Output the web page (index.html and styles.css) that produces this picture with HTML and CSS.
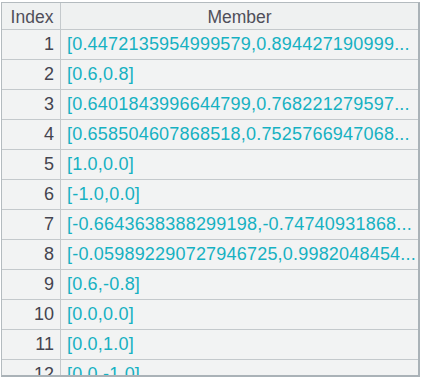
FILE: index.html
```html
<!DOCTYPE html>
<html lang="en">
<head>
    <meta charset="UTF-8">
    <title>Member</title>
    <link rel="stylesheet" href="styles.css">
</head>
<body>
    <div class="grid">
        <div class="row head">
            <div class="idx">Index</div>
            <div class="val">Member</div>
        </div>
        <div class="row"><div class="idx">1</div><div class="val">[0.4472135954999579,0.894427190999...</div></div>
        <div class="row"><div class="idx">2</div><div class="val">[0.6,0.8]</div></div>
        <div class="row"><div class="idx">3</div><div class="val">[0.6401843996644799,0.768221279597...</div></div>
        <div class="row"><div class="idx">4</div><div class="val">[0.658504607868518,0.7525766947068...</div></div>
        <div class="row"><div class="idx">5</div><div class="val">[1.0,0.0]</div></div>
        <div class="row"><div class="idx">6</div><div class="val">[-1.0,0.0]</div></div>
        <div class="row"><div class="idx">7</div><div class="val">[-0.6643638388299198,-0.74740931868...</div></div>
        <div class="row"><div class="idx">8</div><div class="val">[-0.059892290727946725,0.9982048454...</div></div>
        <div class="row"><div class="idx">9</div><div class="val">[0.6,-0.8]</div></div>
        <div class="row"><div class="idx">10</div><div class="val">[0.0,0.0]</div></div>
        <div class="row"><div class="idx">11</div><div class="val">[0.0,1.0]</div></div>
        <div class="row"><div class="idx">12</div><div class="val">[0.0,-1.0]</div></div>
    </div>
</body>
</html>
```

FILE: styles.css
```css
body {
    margin: 0;
    background: #ffffff;
    font-family: "Liberation Sans", Arial, sans-serif;
}
.grid {
    margin: 2px 1px 0 1px;
    height: 375px;
    box-sizing: border-box;
    border-top: 1px solid #b4bbbf;
    border-left: 1px solid #b4bbbf;
    border-right: 2px solid #aab2b7;
    border-bottom: 2px solid #aab2b7;
    background: #f2f3f3;
    overflow: hidden;
}
.row {
    display: flex;
    height: 30px;
    box-sizing: border-box;
    border-bottom: 1px solid #c4c9cc;
    font-size: 18px;
    line-height: 29px;
    white-space: nowrap;
}
.idx {
    width: 59px;
    flex: none;
    box-sizing: border-box;
    border-right: 1px solid #c4c9cc;
    padding-right: 6px;
    text-align: right;
    color: #44444f;
}
.val {
    flex: 1;
    padding-left: 6px;
    overflow: hidden;
    color: #16b1c2;
    letter-spacing: 0.2px;
}
.head {
    height: 27px;
    line-height: 28px;
    font-size: 17.5px;
    background: #eff1f1;
}
.head .idx,
.head .val {
    text-align: center;
    color: #4f4f5a;
    letter-spacing: 0;
    padding: 0;
}
.head .idx {
    padding-left: 2px;
}
```
